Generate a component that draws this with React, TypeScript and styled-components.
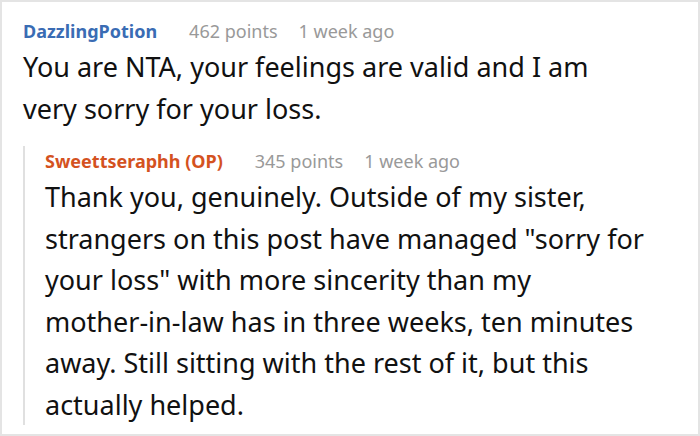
import React from "react";
import styled, { createGlobalStyle } from "styled-components";

const Global = createGlobalStyle`
  html, body { margin: 0; padding: 0; background: #fff; }
  body { font-family: "Noto Sans", "Open Sans", sans-serif; }
`;

const Frame = styled.div`
  box-sizing: border-box;
  width: 700px;
  height: 436px;
  border: 2px solid #e4e4e4;
  padding: 14px 6px 0 21px;
  overflow: hidden;
  background: #fff;
`;

const Comment = styled.div<{ $nested?: boolean }>`
  display: flex;
  flex-direction: column;
  ${(p) =>
    p.$nested
      ? `border-left: 2px solid #e0e0e0; padding-left: 20px; margin-top: 17px;`
      : ``}
`;

const Header = styled.div`
  display: flex;
  align-items: baseline;
  font-size: 18px;
  line-height: 30px;
`;

const Author = styled.span<{ $op?: boolean }>`
  font-weight: 700;
  margin-right: 32px;
  color: ${(p) => (p.$op ? "#d4521f" : "#3a6cb4")};
`;

const Meta = styled.span`
  color: #999;
  & + & { margin-left: 21px; }
`;

const Body = styled.p<{ $max?: string }>`
  margin: 0;
  max-width: ${(p) => p.$max ?? "none"};
  font-size: 27px;
  line-height: 41.5px;
  color: #111;
`;

const NoBreak = styled.span`
  white-space: nowrap;
`;

export default function App() {
  return (
    <>
      <Global />
      <Frame>
        <Comment>
          <Header>
            <Author>DazzlingPotion</Author>
            <Meta>462 points</Meta>
            <Meta>1 week ago</Meta>
          </Header>
          <Body $max="620px">
            You are NTA, your feelings are valid and I am very sorry for your loss.
          </Body>
          <Comment $nested>
            <Header>
              <Author $op>Sweettseraphh (OP)</Author>
              <Meta>345 points</Meta>
              <Meta>1 week ago</Meta>
            </Header>
            <Body>
              Thank you, genuinely. Outside of my sister, strangers on this post have managed "sorry for your loss" with more sincerity than my <NoBreak>mother-in-law</NoBreak> has in three weeks, ten minutes away. Still sitting with the rest of it, but this actually helped.
            </Body>
          </Comment>
        </Comment>
      </Frame>
    </>
  );
}
